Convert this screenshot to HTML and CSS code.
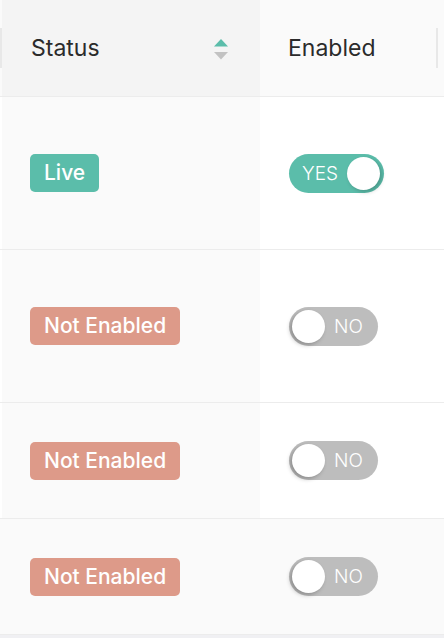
FILE: index.html
```html
<!DOCTYPE html>
<html>
<head>
<meta charset="utf-8">
<link rel="stylesheet" href="styles.css">
</head>
<body>
<div class="page">
<table class="grid">
  <colgroup><col class="c-edge"><col class="c-status"><col class="c-enabled"></colgroup>
  <thead>
    <tr class="head">
      <th class="edge"><span class="divider"></span></th>
      <th class="status-h">
        <div class="th-inner">
          <span>Status</span>
          <svg class="sort" width="14" height="21" viewBox="0 0 14 21"><polygon points="7,0 14,7.5 0,7.5" fill="#5bbdaa"/><polygon points="0,13 14,13 7,20.5" fill="#c2c2c2"/></svg>
        </div>
      </th>
      <th class="enabled-h"><div class="th-inner2"><span>Enabled</span><span class="divider right"></span></div></th>
    </tr>
  </thead>
  <tbody>
    <tr class="tall">
      <td class="edge"></td>
      <td class="status"><span class="badge live">Live</span></td>
      <td class="enabled"><span class="toggle on"><span class="lbl">YES</span><span class="knob"></span></span></td>
    </tr>
    <tr class="tall">
      <td class="edge"></td>
      <td class="status"><span class="badge off">Not Enabled</span></td>
      <td class="enabled"><span class="toggle"><span class="knob"></span><span class="lbl">NO</span></span></td>
    </tr>
    <tr class="short">
      <td class="edge"></td>
      <td class="status"><span class="badge off">Not Enabled</span></td>
      <td class="enabled"><span class="toggle"><span class="knob"></span><span class="lbl">NO</span></span></td>
    </tr>
    <tr class="short hover">
      <td class="edge"></td>
      <td class="status"><span class="badge off">Not Enabled</span></td>
      <td class="enabled"><span class="toggle"><span class="knob"></span><span class="lbl">NO</span></span></td>
    </tr>
  </tbody>
</table>
</div>
</body>
</html>
```
FILE: styles.css
```css
html, body {
  margin: 0;
  padding: 0;
  background: #f0f0f3;
}
.page {
  width: 444px;
  height: 638px;
  overflow: hidden;
  font-family: "Inter", "Open Sans", sans-serif;
}
.grid {
  width: 444px;
  border-collapse: collapse;
  table-layout: fixed;
}
.c-edge { width: 2px; }
.c-status { width: 258px; }
.c-enabled { width: 184px; }
th, td {
  padding: 0;
  border-bottom: 1px solid #ececec;
  vertical-align: middle;
  text-align: left;
}
.head th {
  height: 96px;
  font-weight: 400;
  font-size: 23px;
  color: #2b2b2b;
}
.head .edge { background: #fafafa; }
.divider {
  display: block;
  width: 2px;
  height: 40px;
  background: #e8e8e8;
}
.status-h { background: #f4f4f4; }
.enabled-h { background: #fafafa; }
.th-inner {
  display: flex;
  align-items: center;
  justify-content: space-between;
  padding: 0 32px 0 29px;
}
.sort { display: block; margin-top: 2px; }
.th-inner2 {
  display: flex;
  align-items: center;
  justify-content: space-between;
  padding-left: 28px;
  padding-right: 6px;
}
.tall td { height: 152px; }
.short td { height: 115px; }
td.edge { background: #fff; }
td.status { background: #fafafa; padding-left: 28px; }
td.enabled { background: #fff; padding-left: 29px; }
.hover td { background: #fafafa; }
.badge {
  display: inline-block;
  height: 38px;
  line-height: 38px;
  padding: 0 14px;
  border-radius: 5px;
  color: #fff;
  font-size: 21px;
  font-weight: 500;
}
.badge.live { background: #5bbdaa; }
.badge.off { background: #dd9a89; }
.toggle {
  display: inline-flex;
  align-items: center;
  height: 39px;
  border-radius: 20px;
  background: #bdbdbd;
  padding: 0 3px;
  box-sizing: border-box;
  width: 89px;
  vertical-align: middle;
}
.toggle.on {
  background: #5bbdaa;
  width: 95px;
  justify-content: space-between;
  padding-left: 13px;
  padding-right: 4px;
}
.knob {
  width: 33px;
  height: 33px;
  border-radius: 50%;
  background: #fff;
  box-shadow: -2px 2px 4px rgba(0,0,0,0.25);
}
.toggle.on .knob { box-shadow: 2px 2px 4px rgba(0,0,0,0.2); }
.lbl {
  color: #fff;
  font-size: 19px;
  font-weight: 300;
}
.toggle .knob + .lbl { margin-left: 9px; }
```
